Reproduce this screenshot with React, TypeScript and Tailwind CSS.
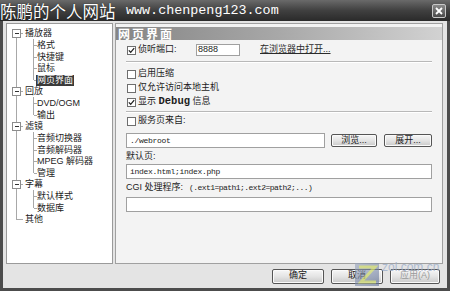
import React from "react";

type Node = { label: string; level: 0 | 1; box?: boolean; selected?: boolean };

const tree: Node[] = [
  { label: "播放器", level: 0, box: true },
  { label: "格式", level: 1 },
  { label: "快捷键", level: 1 },
  { label: "鼠标", level: 1 },
  { label: "网页界面", level: 1, selected: true },
  { label: "回放", level: 0, box: true },
  { label: "DVD/OGM", level: 1 },
  { label: "输出", level: 1 },
  { label: "滤镜", level: 0, box: true },
  { label: "音频切换器", level: 1 },
  { label: "音频解码器", level: 1 },
  { label: "MPEG 解码器", level: 1 },
  { label: "管理", level: 1 },
  { label: "字幕", level: 0, box: true },
  { label: "默认样式", level: 1 },
  { label: "数据库", level: 1 },
  { label: "其他", level: 0 },
];

const ROW = 11.625;
const TOP = 4;
const cy = (i: number) => TOP + i * ROW + ROW / 2;

const TreeLines = () => {
  const lines: React.ReactNode[] = [];
  const lastRoot = tree.length - 1;
  lines.push(<line key="root" x1={9.5} y1={cy(0)} x2={9.5} y2={cy(lastRoot)} />);
  tree.forEach((n, i) => {
    if (n.level === 0) {
      lines.push(<line key={"h" + i} x1={9.5} y1={cy(i)} x2={16} y2={cy(i)} />);
      if (n.box) {
        let last = i;
        while (last + 1 < tree.length && tree[last + 1].level === 1) last++;
        lines.push(<line key={"v" + i} x1={26.5} y1={cy(i) + 5} x2={26.5} y2={cy(last)} />);
      }
    } else {
      lines.push(<line key={"c" + i} x1={26.5} y1={cy(i)} x2={30} y2={cy(i)} />);
    }
  });
  return (
    <svg className="absolute left-0 top-0" width={105} height={238}>
      <g stroke="#a8a8a8" strokeWidth={1} shapeRendering="crispEdges">{lines}</g>
      {tree.map((n, i) =>
        n.box ? (
          <g key={"b" + i} shapeRendering="crispEdges">
            <rect x={5.5} y={cy(i) - 4} width={8} height={8} fill="#fff" stroke="#8c8c8c" />
            <line x1={7.5} y1={cy(i)} x2={12} y2={cy(i)} stroke="#333" />
          </g>
        ) : null
      )}
    </svg>
  );
};

const Check = ({ on }: { on?: boolean }) => (
  <div className="w-[9px] h-[9px] border border-[#6e6e6e] bg-white flex items-center justify-center shrink-0">
    {on && (
      <svg width="7" height="7" viewBox="0 0 7 7">
        <path d="M0.8 3.4 L2.7 5.3 L6.2 1.2" fill="none" stroke="#222" strokeWidth="1.3" />
      </svg>
    )}
  </div>
);

const Btn = ({ children, w, dim }: { children: React.ReactNode; w: string; dim?: boolean }) => (
  <div
    className={
      "h-full flex items-center justify-center border border-[#555] rounded-[2px] bg-gradient-to-b from-[#f6f6f6] via-[#e4e4e4] to-[#c9c9c9] shadow-[inset_0_0_0_1px_#fafafa] " +
      w +
      (dim ? " text-[#9a9a9a]" : " text-[#1a1a1a]")
    }
  >
    {children}
  </div>
);

const mono = "font-['Liberation_Mono',monospace]";

export default function App() {
  return (
    <div className="w-[450px] h-[291px] flex flex-col overflow-hidden font-['Liberation_Sans','Noto_Sans_CJK_SC',sans-serif] text-[9px] text-[#1c1c1c] select-none">
      {/* title bar */}
      <div className="h-[21px] shrink-0 flex items-center bg-gradient-to-b from-[#6a6a6a] via-[#404040] to-[#2a2a2a] text-white">
        <div className="w-[126px] shrink-0 h-full flex items-center">
          <span className="text-[16.5px] leading-[20px] whitespace-nowrap font-['Noto_Sans_CJK_SC',sans-serif] [text-shadow:0_0_1px_#000]">陈鹏的个人网站</span>
        </div>
        <span className={"text-[13.4px] leading-[20px] " + mono}>www.chenpeng123.com</span>
        <div className="ml-auto mr-[4px] w-[14px] h-[14px] border border-[#c8c8c8] rounded-[2px] bg-gradient-to-b from-[#8a8a8a] to-[#4a4a4a] flex items-center justify-center">
          <svg width="8" height="8" viewBox="0 0 8 8">
            <path d="M1 1 L7 7 M7 1 L1 7" stroke="#fff" strokeWidth="1.8" />
          </svg>
        </div>
      </div>

      {/* body */}
      <div className="flex-1 flex flex-col bg-[#e4e4e4] border-l-[3px] border-r-[3px] border-b-[3px] border-[#4c4c4c]">
        <div className="flex pl-[3px] pr-[4px] pt-[2px] gap-[2px] h-[243px]">
          {/* tree */}
          <div className="w-[107px] h-full bg-white border border-[#9a9a9a]">
            <div className="relative h-full pt-[4px]">
              <TreeLines />
              {tree.map((n, i) => (
                <div key={i} className={"relative h-[11.625px] flex items-center leading-none " + (n.level === 0 ? "pl-[17px]" : "pl-[29px]")}>
                  <span className={"px-[1px] py-[1px] whitespace-nowrap " + (n.selected ? "bg-[#3a3a3a] text-white" : "")}>{n.label}</span>
                </div>
              ))}
            </div>
          </div>

          {/* settings panel */}
          <div className="w-[328px] h-full bg-[#f3f3f3] border border-[#a0a0a0] flex flex-col">
            <div className="mt-[3px] h-[13px] bg-gradient-to-r from-[#858585] via-[#a8a8a8] to-[#d2d2d2] flex items-center pl-[2px]">
              <span className="text-white text-[12px] font-bold tracking-[2px] leading-none font-['Noto_Sans_CJK_SC',sans-serif]">网页界面</span>
            </div>

            <div className="px-[10px] flex flex-col">
              <div className="mt-[4px] h-[12px] flex items-center">
                <div className="w-[70px] flex items-center gap-[2px] pl-[1px]">
                  <Check on />
                  <span>侦听端口:</span>
                </div>
                <div className="w-[44px] h-full bg-white border border-[#a0a0a0] flex items-center pl-[1px]">8888</div>
                <span className="ml-[20px] underline text-[#2a2a2a]">在浏览器中打开...</span>
              </div>

              <div className="mt-[5px] h-[2px] border-t border-[#b8b8b8] border-b border-b-white" />

              <div className="mt-[4px] flex flex-col">
                {[
                  { on: false, t: <span>启用压缩</span> },
                  { on: false, t: <span>仅允许访问本地主机</span> },
                  {
                    on: true,
                    t: (
                      <span>
                        显示 <span className={"font-bold text-[10.5px] " + mono}>Debug</span> 信息
                      </span>
                    ),
                  },
                ].map((r, i) => (
                  <div key={i} className="h-[14px] flex items-center gap-[2px] pl-[1px]">
                    <Check on={r.on} />
                    {r.t}
                  </div>
                ))}
              </div>

              <div className="mt-[2px] h-[2px] border-t border-[#b8b8b8] border-b border-b-white" />

              <div className="mt-[2px] h-[12px] flex items-center gap-[2px] pl-[1px]">
                <Check />
                <span>服务页来自:</span>
              </div>

              <div className="mt-[6px] h-[15px] flex items-center">
                <div className={"w-[199px] h-full bg-white border border-[#a0a0a0] flex items-center pl-[3px] text-[8px] tracking-[-0.3px] " + mono}>./webroot</div>
                <div className="ml-[6px] h-[13px] flex">
                  <Btn w="w-[46px]">浏览...</Btn>
                </div>
                <div className="ml-[7px] h-[13px] flex">
                  <Btn w="w-[48px]">展开...</Btn>
                </div>
              </div>

              <div className="mt-[3px] h-[12px] flex items-center">默认页:</div>
              <div className={"mt-[1px] h-[15px] bg-white border border-[#a0a0a0] flex items-center pl-[3px] text-[8px] tracking-[-0.3px] " + mono}>index.html;index.php</div>

              <div className="mt-[3px] h-[12px] flex items-center whitespace-nowrap">
                <span>CGI 处理程序:</span>
                <span className={"ml-[6px] text-[8px] tracking-[-0.55px] " + mono}>(.ext1=path1;.ext2=path2;...)</span>
              </div>
              <div className="mt-[3px] h-[15px] bg-white border border-[#a0a0a0]" />
            </div>
          </div>
        </div>

        {/* bottom buttons */}
        <div className="relative flex-1 flex items-center justify-end pr-[7px] gap-[7px]">
          <div className="h-[15px] flex">
            <Btn w="w-[52px]">确定</Btn>
          </div>
          <div className="h-[15px] flex">
            <Btn w="w-[52px]">取消</Btn>
          </div>
          <div className="h-[15px] flex">
            <Btn w="w-[50px]" dim>应用(A)</Btn>
          </div>
          {/* watermark */}
          <div className="absolute left-[350px] top-[-3px] flex items-start pointer-events-none">
            <svg width="28" height="26" viewBox="0 0 28 26" className="opacity-80">
              <defs>
                <linearGradient id="wm" x1="0" y1="0" x2="1" y2="1">
                  <stop offset="0" stopColor="#9aa6bd" />
                  <stop offset="1" stopColor="#5d6f96" />
                </linearGradient>
              </defs>
              <rect x="2" y="2" width="24" height="23" fill="url(#wm)" opacity="0.75" />
              <path d="M6 6 H22 L8 21 H23" fill="none" stroke="#d6e06a" strokeWidth="3" opacity="0.85" />
            </svg>
            <span className="ml-[1px] text-[12px] leading-none text-[#9fb0cc] opacity-80 whitespace-nowrap">zol.com.cn</span>
          </div>
        </div>
      </div>
    </div>
  );
}
